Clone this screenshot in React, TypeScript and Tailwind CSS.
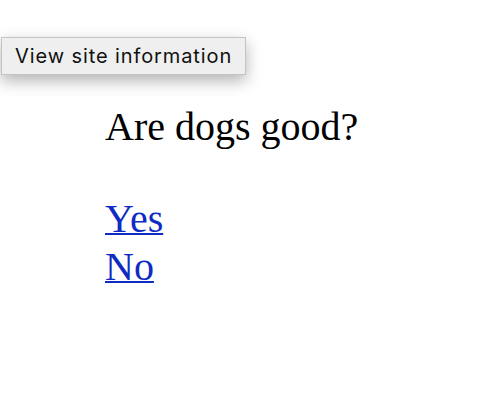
import React from "react";

export default function App() {
  return (
    <div className="relative w-[500px] h-[406px] bg-white overflow-hidden">
      {/* popup button laid over the page */}
      <button className="absolute left-[1px] top-[37px] w-[245px] h-[38px] bg-[#efefef] border border-[#c4c4c4] shadow-[0_6px_16px_rgba(0,0,0,0.3)] text-[20px] tracking-[0.9px] text-[#111] font-['Inter',sans-serif] leading-none flex items-center pl-[13px]">
        View site information
      </button>

      <div className="pt-[103px] pl-[105px] font-['Liberation_Serif',serif] text-[40px] leading-[48px]">
        <h1 className="text-black">Are dogs good?</h1>
        <div className="mt-[44px] flex flex-col items-start">
          <a href="#" className="text-[#0f2bc2] underline decoration-2">
            Yes
          </a>
          <a href="#" className="text-[#0f2bc2] underline decoration-2">
            No
          </a>
        </div>
      </div>
    </div>
  );
}
